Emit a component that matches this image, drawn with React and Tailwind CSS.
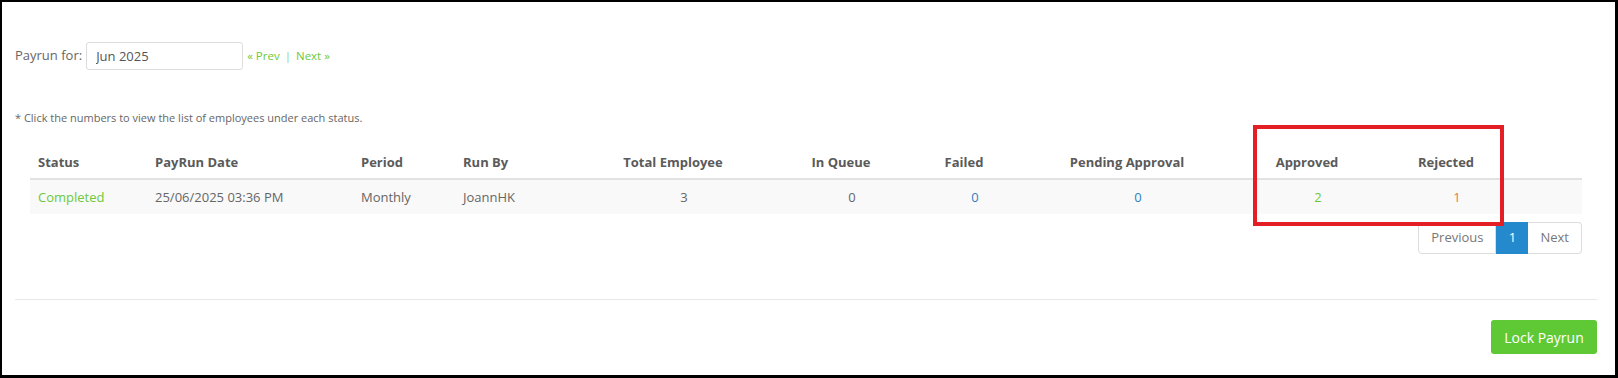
import React from "react"

const cols = [
  { key: "status", label: "Status", w: "w-[117px]", align: "left" },
  { key: "date", label: "PayRun Date", w: "w-[206px]", align: "left" },
  { key: "period", label: "Period", w: "w-[102px]", align: "left" },
  { key: "runBy", label: "Run By", w: "w-[145px]", align: "left" },
  { key: "total", label: "Total Employee", w: "w-[168px]", align: "center" },
  { key: "queue", label: "In Queue", w: "w-[168px]", align: "center" },
  { key: "failed", label: "Failed", w: "w-[78px]", align: "center" },
  { key: "pending", label: "Pending Approval", w: "w-[248px]", align: "center" },
  { key: "approved", label: "Approved", w: "w-[112px]", align: "center" },
  { key: "rejected", label: "Rejected", w: "w-[166px]", align: "center" },
]

const row = {
  status: { v: "Completed", c: "text-[#6cc93a]" },
  date: { v: "25/06/2025 03:36 PM", c: "text-[#666]" },
  period: { v: "Monthly", c: "text-[#666]" },
  runBy: { v: "JoannHK", c: "text-[#666]" },
  total: { v: "3", c: "text-[#666]" },
  queue: { v: "0", c: "text-[#666]" },
  failed: { v: "0", c: "text-[#2f7fc1]" },
  pending: { v: "0", c: "text-[#2f7fc1]" },
  approved: { v: "2", c: "text-[#6cc93a]" },
  rejected: { v: "1", c: "text-[#f0773c]" },
}

export default function App() {
  return (
    <div className="relative box-border w-[1618px] h-[378px] bg-white border-black border-t-2 border-l-2 border-r-[3px] border-b-[3px] pl-[13px] pr-[18px] font-['Open_Sans',sans-serif] text-[#666] overflow-hidden">
      {/* payrun selector */}
      <div className="flex items-center pt-[40px]">
        <label className="text-[13px] text-[#666]">Payrun for:</label>
        <input
          readOnly
          value="Jun 2025"
          className="ml-[4px] box-border w-[157px] h-[28px] rounded-[3px] border border-[#ddd] px-[9px] text-[13px] text-[#555] outline-none"
        />
        <div className="ml-[4px] flex items-center text-[11.5px] text-[#6cc93a]">
          <span>« Prev</span>
          <span className="mx-[5px] text-[#8fd96a]">|</span>
          <span>Next »</span>
        </div>
      </div>

      <div className="mt-[40px] text-[11px] leading-[16px] text-[#666]">
        * Click the numbers to view the list of employees under each status.
      </div>

      {/* table */}
      <div className="px-[15px] mt-[16px]">
        <div className="flex border-b-2 border-[#e2e2e2]">
          {cols.map(c => (
            <div
              key={c.key}
              className={`${c.w} shrink-0 pt-[11px] pb-[7px] text-[13px] leading-[18px] font-bold text-[#5a5a5a] whitespace-nowrap ${c.align === "center" ? "text-center pl-[8px] pr-[30px]" : "px-[8px]"}`}
            >
              {c.label}
            </div>
          ))}
          <div className="flex-1" />
        </div>
        <div className="flex bg-[#f9f9f9]">
          {cols.map(c => (
            <div
              key={c.key}
              className={`${c.w} shrink-0 px-[8px] pt-[8px] pb-[8px] text-[13px] leading-[18px] whitespace-nowrap ${row[c.key].c} ${c.align === "center" ? "text-center" : ""}`}
            >
              {row[c.key].v}
            </div>
          ))}
          <div className="flex-1" />
        </div>

        {/* pagination */}
        <div className="mt-[8px] flex justify-end">
          <div className="flex h-[32px] text-[13px]">
            <button className="h-full px-[12px] border border-[#ddd] rounded-l-[4px] text-[#777] bg-white">Previous</button>
            <button className="h-full w-[32px] border border-[#2589cd] bg-[#2589cd] text-white">1</button>
            <button className="h-full px-[12px] border border-l-0 border-[#ddd] rounded-r-[4px] text-[#777] bg-white">Next</button>
          </div>
        </div>
      </div>

      <div className="mt-[45px] h-px bg-[#e8e8e8]" />

      <div className="mt-[20px] flex justify-end">
        <button className="w-[106px] h-[34px] rounded-[3px] bg-[#5fc935] text-white text-[14px]">
          Lock Payrun
        </button>
      </div>

      {/* highlight annotation */}
      <div className="absolute left-[1251px] top-[123px] w-[251px] h-[101px] border-4 border-[#e31e25] pointer-events-none" />
    </div>
  )
}
